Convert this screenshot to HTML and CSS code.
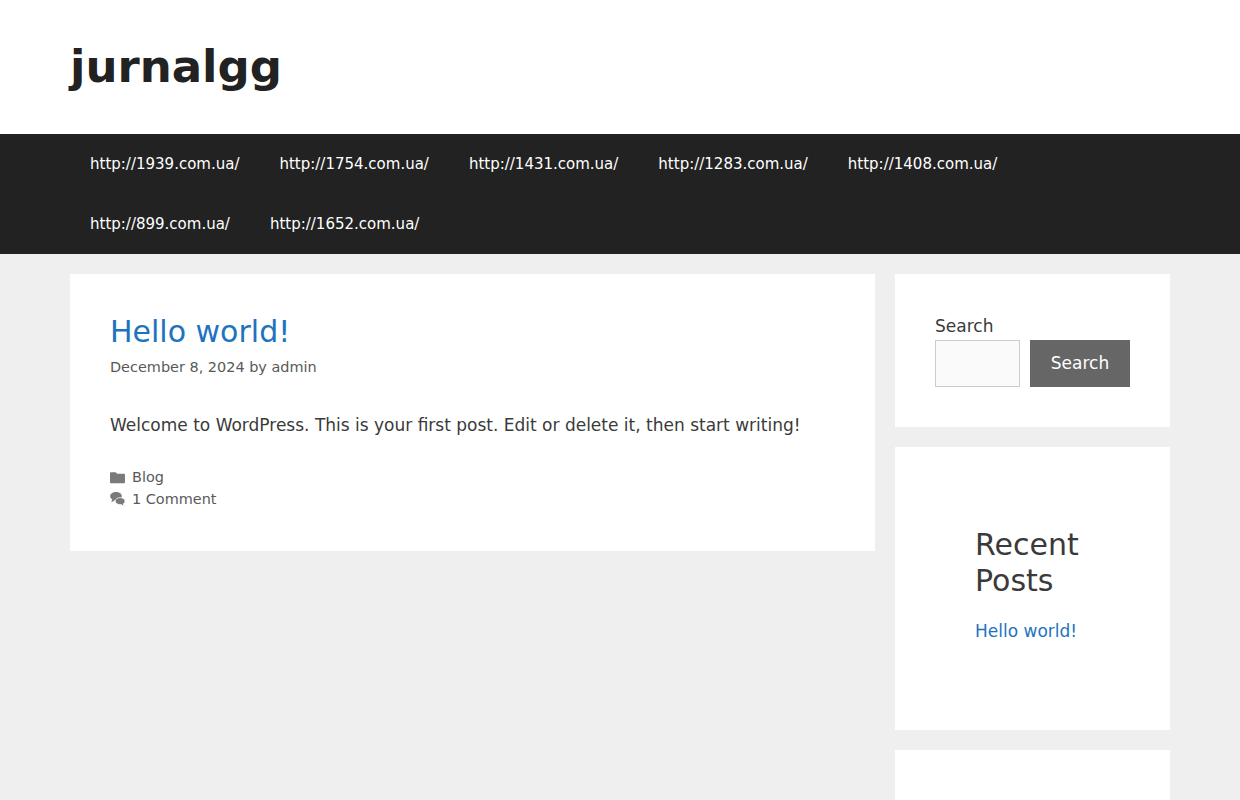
FILE: index.html
```html
<!DOCTYPE html>
<html lang="en">
<head>
<meta charset="utf-8">
<title>jurnalgg</title>
<link rel="stylesheet" href="styles.css">
</head>
<body>
<header class="site-header">
  <a class="site-title" href="#">jurnalgg</a>
</header>
<nav class="main-nav">
  <ul class="menu">
    <li><a href="#">http://1939.com.ua/</a></li>
    <li><a href="#">http://1754.com.ua/</a></li>
    <li><a href="#">http://1431.com.ua/</a></li>
    <li><a href="#">http://1283.com.ua/</a></li>
    <li><a href="#">http://1408.com.ua/</a></li>
    <li><a href="#">http://899.com.ua/</a></li>
    <li><a href="#">http://1652.com.ua/</a></li>
  </ul>
</nav>
<div class="content">
  <main class="primary">
    <article class="card post">
      <h2 class="post-title"><a href="#">Hello world!</a></h2>
      <div class="post-meta">December 8, 2024 by <a href="#">admin</a></div>
      <p class="post-body">Welcome to WordPress. This is your first post. Edit or delete it, then start writing!</p>
      <footer class="post-footer">
        <div class="foot-row">
          <svg class="foot-icon" viewBox="0 0 16 16"><path fill="currentColor" d="M1 2.500h5l1.500 1.500H15c.6 0 1 .4 1 1v8c0 .6-.4 1-1 1H1c-.6 0-1-.4-1-1V3.500c0-.6.4-1 1-1z"/></svg>
          <a href="#">Blog</a>
        </div>
        <div class="foot-row">
          <svg class="foot-icon" viewBox="0 0 16 16"><path fill="currentColor" d="M6.500 0C10 0 12.600 1.900 12.600 4.400S10 8.900 6.500 8.900c-.6 0-1.100 0-1.700-.2-.9 1-2.300 1.700-3.600 1.800.7-.8 1.100-1.700 1.200-2.700C1 6.900.2 5.700.2 4.400.2 1.900 3 0 6.500 0z"/><path class="bubble-back" fill="currentColor" d="M10.800 6c3 0 5.200 1.600 5.200 3.700 0 1.200-.7 2.200-1.800 2.900.1 1 .6 1.800 1.200 2.400-1.300-.1-2.400-.7-3.300-1.600-.4.100-.8.100-1.300.1-3 0-5.200-1.700-5.200-3.800S7.800 6 10.800 6z"/></svg>
          <a href="#">1 Comment</a>
        </div>
      </footer>
    </article>
  </main>
  <aside class="sidebar">
    <section class="card widget-search">
      <label class="search-label" for="s">Search</label>
      <form class="search-form">
        <input class="search-input" id="s" type="text">
        <button class="search-btn" type="button">Search</button>
      </form>
    </section>
    <section class="card widget-recent">
      <h2 class="recent-title">Recent Posts</h2>
      <a class="recent-link" href="#">Hello world!</a>
    </section>
    <section class="card widget-empty"></section>
  </aside>
</div>
</body>
</html>
```
FILE: styles.css
```css
* { box-sizing: border-box; }
html, body { margin: 0; padding: 0; }
body {
  background: #efefef;
  color: #3a3a3a;
  font-family: "DejaVu Sans", sans-serif;
  font-size: 17px;
  line-height: 1.5;
  height: 800px;
  overflow: hidden;
}
a { text-decoration: none; color: #1e73be; }
.site-header { background: #fff; padding: 40px 70px; height: 134px; }
.site-title { color: #222; font-size: 45px; font-weight: 700; line-height: 54px; display: block; }
.main-nav { background: #222; padding: 0 70px; }
.menu { list-style: none; margin: 0; padding: 0; display: flex; flex-wrap: wrap; }
.menu a { display: block; color: #fff; font-size: 15px; line-height: 60px; padding: 0 20px; }
.content { display: flex; gap: 20px; padding: 20px 70px 0; align-items: flex-start; }
.primary { width: 805px; flex: none; }
.sidebar { width: 275px; flex: none; display: flex; flex-direction: column; gap: 20px; }
.card { background: #fff; }
.post { padding: 40px; height: 277px; }
.post-title { margin: 0; font-size: 30px; font-weight: 400; line-height: 36px; }
.post-meta { margin-top: 5px; font-size: 14.45px; line-height: 24px; color: #595959; }
.post-meta a { color: #595959; }
.post-body { margin: 33px 0 0; line-height: 26px; }
.post-footer { margin-top: 28px; font-size: 14.45px; line-height: 22px; color: #595959; }
.post-footer a { color: #595959; }
.foot-row { display: flex; align-items: center; gap: 7px; }
.foot-icon { width: 15px; height: 15px; flex: none; opacity: .8; }
.bubble-back { stroke: #fff; stroke-width: .8; }
.widget-search { padding: 40px; height: 153px; }
.search-label { display: block; font-size: 17px; line-height: 26px; margin-top: -1px; margin-bottom: 1px; }
.search-form { display: flex; gap: 10px; }
.search-input { width: 85px; height: 47px; flex: none; background: #fafafa; border: 1px solid #ccc; padding: 0; }
.search-btn { flex: none; width: 100px; height: 47px; border: 0; background: #666; color: #fff; font: 17px/46px "DejaVu Sans", sans-serif; padding: 0 0 1px; }
.widget-recent { padding: 80px 40px 0 80px; height: 283px; }
.recent-title { margin: 0; font-size: 30px; font-weight: 400; line-height: 36px; }
.recent-link { display: block; margin-top: 19px; line-height: 26px; }
.widget-empty { height: 50px; }
```
